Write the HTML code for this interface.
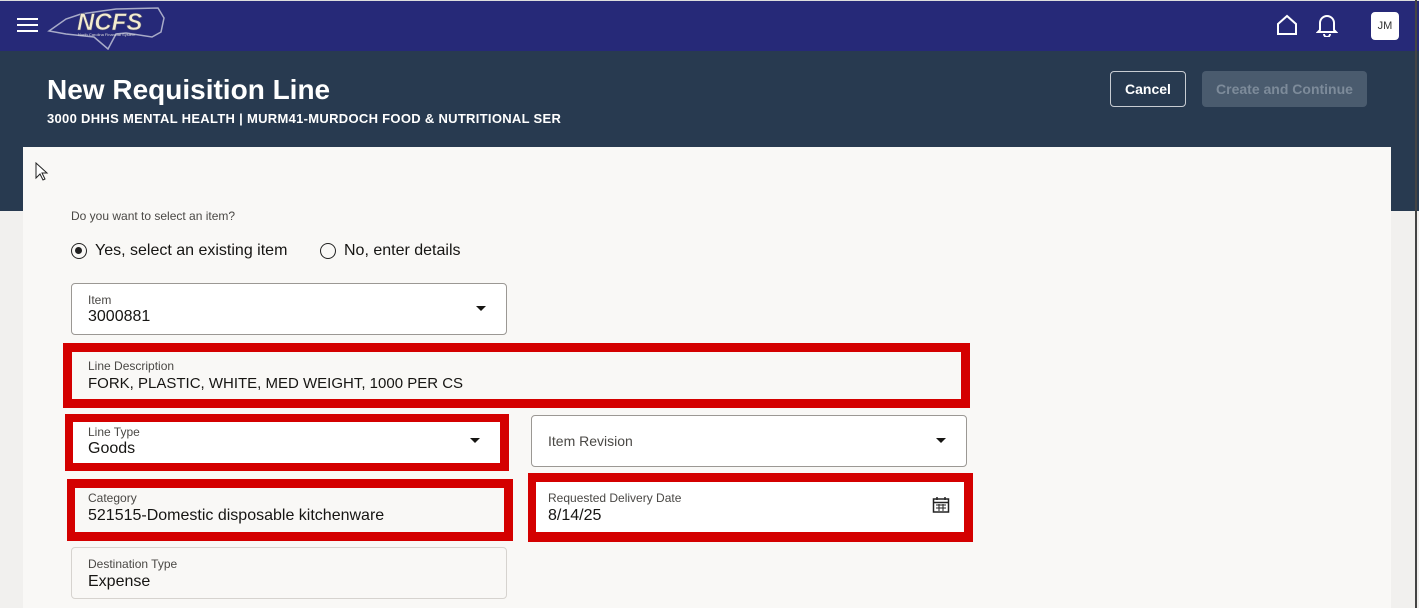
<!DOCTYPE html>
<html><head><meta charset="utf-8"><style>
*{margin:0;padding:0;box-sizing:border-box}
html,body{width:1419px;height:608px;overflow:hidden}
body{background:#f1f0ee;font-family:"Liberation Sans",sans-serif;position:relative;color:#161513}
.a{position:absolute}
.top{left:0;top:0;width:1419px;height:51px;background:#262978;border-top:1px solid #ddd}
.hdr{left:0;top:51px;width:1419px;height:160px;background:#283a50}
.card{left:23px;top:147px;width:1368px;height:461px;background:#f9f8f6}
.red{position:absolute;background:#d40000}
.f{position:absolute;border:1px solid #9b9894;border-radius:4px;background:#fff}
.ro{background:#f9f8f6}
.lb{position:absolute;left:16px;top:9px;font-size:12px;color:#4a4845}
.v{position:absolute;left:16px;top:24px;font-size:16px;color:#161513}
.dd{position:absolute;right:20px;top:22px;width:0;height:0;border-left:5px solid transparent;border-right:5px solid transparent;border-top:5px solid #161513}
</style></head><body>
<div class="a top"></div>
<div class="a" style="left:17px;top:18px;width:21px;height:2px;background:#fff;box-shadow:0 6px 0 #fff,0 12px 0 #fff"></div>
<svg class="a" style="left:46px;top:4px" width="122" height="46" viewBox="0 0 122 46"><path d="M3 27 L20 15 L35 10 L70 5 L112 4 L118 14 L115 28 L106 33 L80 29 L70 30 L62 45 L48 33 L20 30 Z" fill="none" stroke="#a8abc8" stroke-width="1.5"/><text x="31" y="26" font-family="Liberation Sans" font-weight="bold" font-style="italic" font-size="24" fill="#f4ecd0" stroke="#4a4a70" stroke-width=".6">NCFS</text><text x="32" y="32" font-size="4" fill="#ddd">North Carolina Financial System</text></svg>
<svg class="a" style="left:1276px;top:14px" width="22" height="22" viewBox="0 0 22 22"><path d="M2 10 L11 2 L20 10 V20 H2 Z" fill="none" stroke="#fff" stroke-width="2"/></svg>
<svg class="a" style="left:1316px;top:13px" width="22" height="24" viewBox="0 0 22 24"><path d="M4 17 V10 A7 7 0 0 1 18 10 V17 L20 19 H2 Z M8 21 A3 3 0 0 0 14 21" fill="none" stroke="#fff" stroke-width="2"/></svg>
<div class="a" style="left:1371px;top:12px;width:28px;height:28px;background:#fff;border-radius:4px;font-size:11px;color:#333;text-align:center;line-height:28px">JM</div>
<div class="a hdr"></div>
<div class="a" style="left:47px;top:74px;font-size:28px;font-weight:bold;color:#fff">New Requisition Line</div>
<div class="a" style="left:47px;top:111px;font-size:13px;font-weight:bold;color:#fff;letter-spacing:0.3px">3000 DHHS MENTAL HEALTH | MURM41-MURDOCH FOOD &amp; NUTRITIONAL SER</div>
<div class="a" style="left:1110px;top:71px;width:76px;height:36px;border:1px solid #c8ccd2;border-radius:4px;color:#fff;font-weight:bold;font-size:14px;text-align:center;line-height:34px">Cancel</div>
<div class="a" style="left:1202px;top:71px;width:165px;height:36px;background:#4a5b6e;border-radius:4px;color:#7d8b9a;font-weight:bold;font-size:14px;text-align:center;line-height:36px">Create and Continue</div>
<div class="a" style="left:1415px;top:0;width:2px;height:608px;background:#444"></div>
<div class="a card"></div>
<svg class="a" style="left:35px;top:162px" width="14" height="20" viewBox="0 0 14 20"><path d="M1 1 V16 L5 12 L8 18 L10 17 L7 11 H12 Z" fill="#fff" stroke="#222" stroke-width="1"/></svg>
<div class="a" style="left:71px;top:209px;font-size:12px;color:#4a4845">Do you want to select an item?</div>
<div class="a" style="left:71px;top:243px;width:16px;height:16px;border:1.5px solid #222;border-radius:50%"><div style="margin:3px;width:7px;height:7px;border-radius:50%;background:#222"></div></div>
<div class="a" style="left:95px;top:242px;font-size:16px">Yes, select an existing item</div>
<div class="a" style="left:320px;top:243px;width:16px;height:16px;border:1.5px solid #222;border-radius:50%"></div>
<div class="a" style="left:344px;top:242px;font-size:16px">No, enter details</div>
<div class="f" style="left:71px;top:283px;width:436px;height:52px"><div class="lb">Item</div><div class="v">3000881</div><div class="dd"></div></div>
<div class="red" style="left:63px;top:343px;width:907px;height:65px"></div>
<div class="f ro" style="left:72px;top:352px;width:889px;height:47px;border:none;border-radius:0"><div class="lb" style="top:7px">Line Description</div><div class="v" style="top:23px;font-size:15px">FORK, PLASTIC, WHITE, MED WEIGHT, 1000 PER CS</div></div>
<div class="red" style="left:65px;top:414px;width:444px;height:57px"></div>
<div class="f" style="left:73px;top:422px;width:427px;height:41px;border:none;border-radius:0"><div class="lb" style="left:15px;top:3px">Line Type</div><div class="v" style="left:15px;top:18px">Goods</div><div class="dd" style="top:16px"></div></div>
<div class="f" style="left:531px;top:415px;width:436px;height:52px"><div class="v" style="top:17px;font-size:14px;color:#4a4845">Item Revision</div><div class="dd"></div></div>
<div class="red" style="left:67px;top:479px;width:446px;height:62px"></div>
<div class="f ro" style="left:75px;top:488px;width:429px;height:44px;border:none;border-radius:0"><div class="lb" style="left:13px;top:3px">Category</div><div class="v" style="left:13px;top:19px">521515-Domestic disposable kitchenware</div></div>
<div class="red" style="left:528px;top:473px;width:445px;height:69px"></div>
<div class="f" style="left:536px;top:482px;width:428px;height:50px;border:none;border-radius:0"><div class="lb" style="left:12px;top:9px">Requested Delivery Date</div><div class="v" style="left:12px;top:25px">8/14/25</div>
<svg style="position:absolute;right:14px;top:14px" width="18" height="18" viewBox="0 0 18 18"><rect x="1.5" y="3" width="15" height="13" fill="none" stroke="#222" stroke-width="1.5"/><path d="M1.5 6.5 H16.5" stroke="#222" stroke-width="1.5"/><path d="M5 1 V4 M13 1 V4" stroke="#222" stroke-width="1.5"/><path d="M4 9 H14 M4 12 H14 M7 8 V15 M11 8 V15" stroke="#222" stroke-width="1"/></svg></div>
<div class="f ro" style="left:71px;top:547px;width:436px;height:52px;border-color:#d6d3cf"><div class="lb">Destination Type</div><div class="v" style="top:25px">Expense</div></div>
</body></html>
